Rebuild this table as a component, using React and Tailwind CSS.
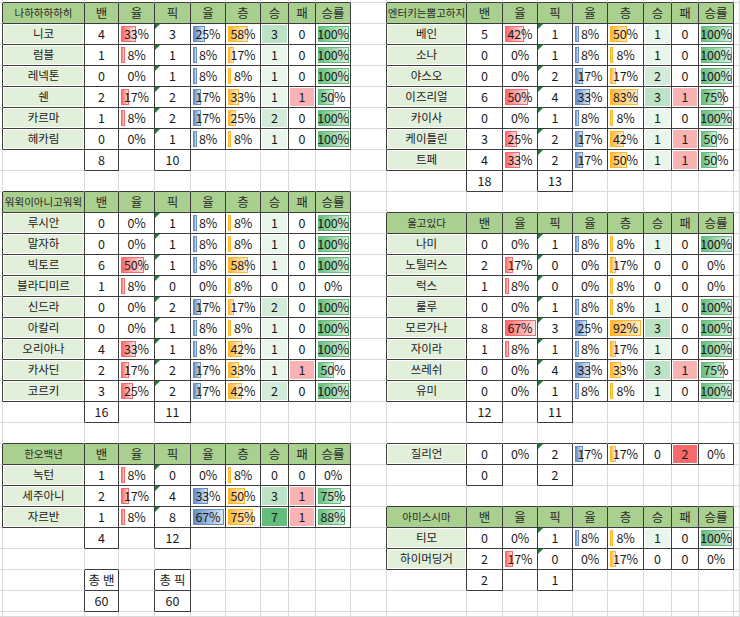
import React from "react";

const BAR = {
  red: "border-[#f8696b] bg-linear-to-r from-[#f8696b] to-[#fde0e0]",
  blue: "border-[#638ec6] bg-linear-to-r from-[#638ec6] to-[#dfe7f4]",
  orange: "border-[#ffb628] bg-linear-to-r from-[#ffb628] to-[#ffedcc]",
  green: "border-[#63be7b] bg-linear-to-r from-[#63be7b] to-[#dcf0e1]",
};
const SCALE = { red: 67, blue: 67, orange: 92, green: 100 };
const WIN = { 1: "bg-[#e9f6ec]", 2: "bg-[#d2ecd9]", 3: "bg-[#bce3c6]", 7: "bg-[#63be7b]" };
const LOSS = { 1: "bg-[#fab3b4]", 2: "bg-[#f8696b]" };

const T1 = [
  ["니코", 4, 33, 3, 25, 58, 3, 0, 100],
  ["럼블", 1, 8, 1, 8, 17, 1, 0, 100],
  ["레넥톤", 0, 0, 1, 8, 8, 1, 0, 100],
  ["쉔", 2, 17, 2, 17, 33, 1, 1, 50],
  ["카르마", 1, 8, 2, 17, 25, 2, 0, 100],
  ["헤카림", 0, 0, 1, 8, 8, 1, 0, 100],
];
const T2 = [
  ["루시안", 0, 0, 1, 8, 8, 1, 0, 100],
  ["말자하", 0, 0, 1, 8, 8, 1, 0, 100],
  ["빅토르", 6, 50, 1, 8, 58, 1, 0, 100],
  ["블라디미르", 1, 8, 0, 0, 8, 0, 0, 0],
  ["신드라", 0, 0, 2, 17, 17, 2, 0, 100],
  ["아칼리", 0, 0, 1, 8, 8, 1, 0, 100],
  ["오리아나", 4, 33, 1, 8, 42, 1, 0, 100],
  ["카사딘", 2, 17, 2, 17, 33, 1, 1, 50],
  ["코르키", 3, 25, 2, 17, 42, 2, 0, 100],
];
const T3 = [
  ["녹턴", 1, 8, 0, 0, 8, 0, 0, 0],
  ["세주아니", 2, 17, 4, 33, 50, 3, 1, 75],
  ["자르반", 1, 8, 8, 67, 75, 7, 1, 88],
];
const R1 = [
  ["베인", 5, 42, 1, 8, 50, 1, 0, 100],
  ["소나", 0, 0, 1, 8, 8, 1, 0, 100],
  ["야스오", 0, 0, 2, 17, 17, 2, 0, 100],
  ["이즈리얼", 6, 50, 4, 33, 83, 3, 1, 75],
  ["카이사", 0, 0, 1, 8, 8, 1, 0, 100],
  ["케이틀린", 3, 25, 2, 17, 42, 1, 1, 50],
  ["트페", 4, 33, 2, 17, 50, 1, 1, 50],
];
const R2 = [
  ["나미", 0, 0, 1, 8, 8, 1, 0, 100],
  ["노틸러스", 2, 17, 0, 0, 17, 0, 0, 0],
  ["럭스", 1, 8, 0, 0, 8, 0, 0, 0],
  ["룰루", 0, 0, 1, 8, 8, 1, 0, 100],
  ["모르가나", 8, 67, 3, 25, 92, 3, 0, 100],
  ["자이라", 1, 8, 1, 8, 17, 1, 0, 100],
  ["쓰레쉬", 0, 0, 4, 33, 33, 3, 1, 75],
  ["유미", 0, 0, 1, 8, 8, 1, 0, 100],
];
const R3 = [["질리언", 0, 0, 2, 17, 17, 0, 2, 0]];
const R4 = [
  ["티모", 0, 0, 1, 8, 8, 1, 0, 100],
  ["하이머딩거", 2, 17, 0, 0, 17, 0, 0, 0],
];

const HEADS = ["밴", "율", "픽", "율", "층", "승", "패", "승률"];

function buildSheet() {
  const rows = Array.from({ length: 31 }, () => Array(21).fill(null));
  const place = (r0, c0, title, data, totals) => {
    let r = r0;
    if (title) {
      rows[r][c0] = { t: "head", text: title, small: true };
      HEADS.forEach((h, i) => (rows[r][c0 + 1 + i] = { t: "head", text: h }));
      r++;
    }
    data.forEach((d) => {
      const [name, ban, bp, pick, pp, tp, w, l, wp] = d;
      rows[r][c0] = { t: "name", text: name };
      rows[r][c0 + 1] = { t: "num", text: String(ban) };
      rows[r][c0 + 2] = { t: "bar", pct: bp, color: "red" };
      rows[r][c0 + 3] = { t: "num", text: String(pick), tri: true };
      rows[r][c0 + 4] = { t: "bar", pct: pp, color: "blue" };
      rows[r][c0 + 5] = { t: "bar", pct: tp, color: "orange" };
      rows[r][c0 + 6] = { t: "win", v: w };
      rows[r][c0 + 7] = { t: "loss", v: l };
      rows[r][c0 + 8] = { t: "bar", pct: wp, color: "green" };
      r++;
    });
    rows[r][c0 + 1] = { t: "num", text: String(totals[0]) };
    rows[r][c0 + 3] = { t: "num", text: String(totals[1]) };
  };
  place(1, 1, "나하하하하히", T1, [8, 10]);
  place(10, 1, "워윅이아니고워윅", T2, [16, 11]);
  place(22, 1, "한오백년", T3, [4, 12]);
  rows[28][2] = { t: "num", text: "총 밴" };
  rows[29][2] = { t: "num", text: "60" };
  rows[28][4] = { t: "num", text: "총 픽" };
  rows[29][4] = { t: "num", text: "60" };
  place(1, 11, "엔터키는뽑고하지", R1, [18, 13]);
  place(11, 11, "울고있다", R2, [12, 11]);
  place(22, 11, null, R3, [0, 2]);
  place(25, 11, "아미스시마", R4, [2, 1]);
  return rows;
}

function CellBody({ cell }) {
  if (!cell) return null;
  if (cell.t === "head") {
    return (
      <div className="flex h-full items-center justify-center whitespace-nowrap bg-[#a9d08e] text-[#2a2a2a]">
        <span className={cell.small ? "text-[10.5px]" : "text-[12.5px]"}>{cell.text}</span>
      </div>
    );
  }
  if (cell.t === "name") {
    return (
      <div className="h-full p-px">
        <div className="flex h-full items-center justify-center whitespace-nowrap bg-[#e2efda] text-[11.5px] text-[#1a1a1a]">
          {cell.text}
        </div>
      </div>
    );
  }
  if (cell.t === "num") {
    return (
      <div className="flex h-full items-center justify-center whitespace-nowrap text-[12.5px] text-[#1a1a1a]">
        {cell.tri && (
          <span className="absolute left-0 top-0 h-0 w-0 border-r-[5px] border-t-[5px] border-r-transparent border-t-[#1e7b3e]" />
        )}
        {cell.text}
      </div>
    );
  }
  if (cell.t === "bar") {
    const w = cell.pct > 0 ? Math.max(3, Math.round((cell.pct / SCALE[cell.color]) * 31)) : 0;
    return (
      <div className="flex h-full items-center justify-center whitespace-nowrap text-[12.5px] tracking-[-0.2px] text-[#1a1a1a]">
        {w > 0 && (
          <div className={`absolute left-[2px] top-[2px] bottom-[2px] border ${BAR[cell.color]}`} style={{ width: w }} />
        )}
        <span className="relative">{cell.pct}%</span>
      </div>
    );
  }
  if (cell.t === "win" || cell.t === "loss") {
    const fill = cell.t === "win" ? WIN[cell.v] : LOSS[cell.v];
    return (
      <div className="h-full p-px">
        <div className={`flex h-full items-center justify-center text-[12.5px] text-[#1a1a1a] ${fill || ""}`}>{cell.v}</div>
      </div>
    );
  }
  return null;
}

export default function App() {
  const rows = buildSheet();
  const boxed = (r, c) => rows[r] != null && rows[r][c] != null;
  return (
    <div className="flex h-[617px] w-[740px] flex-col overflow-hidden bg-white font-['Noto_Sans_CJK_KR','Noto_Sans',sans-serif]">
      {rows.map((row, r) => (
        <div
          key={r}
          className={`grid grid-cols-[3px_82px_34px_36px_36px_35px_35px_28px_27px_35px_36px_80px_36px_35px_35px_35px_36px_28px_27px_35px_6px] ${
            r === 0 ? "h-[3px]" : r === 30 ? "h-[5px]" : "h-[21px]"
          }`}
        >
          {row.map((cell, c) => {
            const rd = boxed(r, c) || boxed(r, c + 1);
            const bd = boxed(r, c) || boxed(r + 1, c);
            return (
              <div
                key={c}
                className={`relative overflow-hidden border-b border-r ${rd ? "border-r-[#3c3c3c]" : "border-r-[#dadada]"} ${
                  bd ? "border-b-[#3c3c3c]" : "border-b-[#dadada]"
                }`}
              >
                <CellBody cell={cell} />
              </div>
            );
          })}
        </div>
      ))}
    </div>
  );
}
